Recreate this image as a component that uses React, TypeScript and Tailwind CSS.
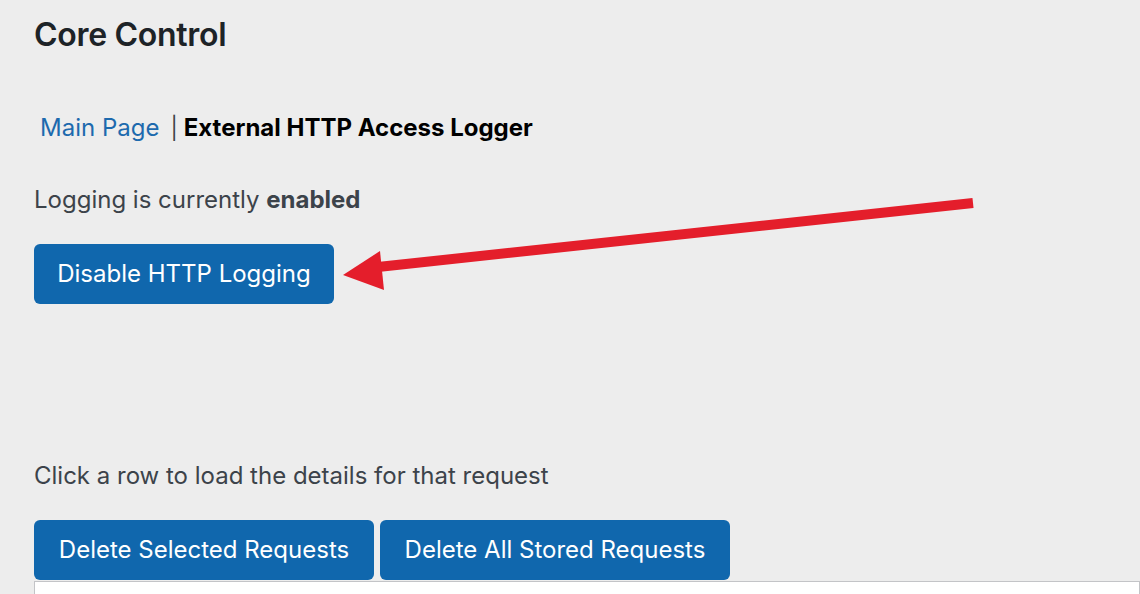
import { useState } from "react";

const font = { fontFamily: "Inter, 'Liberation Sans', sans-serif" };

function ArrowPointer() {
  return (
    <svg
      className="absolute left-0 top-0 pointer-events-none"
      width="1140"
      height="594"
      viewBox="0 0 1140 594"
    >
      <line x1="973" y1="203" x2="378" y2="267" stroke="#e41e2b" strokeWidth="10" />
      <polygon points="343,275 380,251 384,290" fill="#e41e2b" />
    </svg>
  );
}

export default function App() {
  const [enabled, setEnabled] = useState(true);

  return (
    <div className="relative w-[1140px] h-[594px] overflow-hidden bg-[#ededed] text-[#3c434a]" style={font}>
      <div className="pl-[34px] pt-[14px]">
        {/* Page title */}
        <h1 className="text-[32px] font-semibold text-[#1d2327] leading-[42px] tracking-[-0.3px]">Core Control</h1>

        {/* Breadcrumb nav */}
        <div className="mt-[56px] flex items-center text-[24px] leading-[32px] pl-[6px]">
          <a className="text-[#1d6aae]">Main Page</a>
          <span className="ml-[11px] mr-[6px] text-[#3c434a] text-[22px]">|</span>
          <span className="font-bold text-black">External HTTP Access Logger</span>
        </div>

        <p className="mt-[40px] text-[24px] leading-[32px]">
          Logging is currently <b className="font-bold">{enabled ? "enabled" : "disabled"}</b>
        </p>

        <button
          onClick={() => setEnabled(!enabled)}
          className="mt-[28px] h-[60px] w-[300px] rounded-[6px] bg-[#1067ad] text-white text-[24px]"
        >
          {enabled ? "Disable" : "Enable"} HTTP Logging
        </button>

        <p className="mt-[156px] text-[24px] leading-[32px]">Click a row to load the details for that request</p>

        <div className="mt-[28px] flex gap-[6px]">
          <button className="h-[60px] w-[340px] rounded-[6px] bg-[#1067ad] text-white text-[24px]">
            Delete Selected Requests
          </button>
          <button className="h-[60px] w-[350px] rounded-[6px] bg-[#1067ad] text-white text-[24px]">
            Delete All Stored Requests
          </button>
        </div>

        {/* Request table */}
        <div className="mt-px h-[40px] bg-white border border-[#c3c4c7]" />
      </div>
      <ArrowPointer />
    </div>
  );
}
